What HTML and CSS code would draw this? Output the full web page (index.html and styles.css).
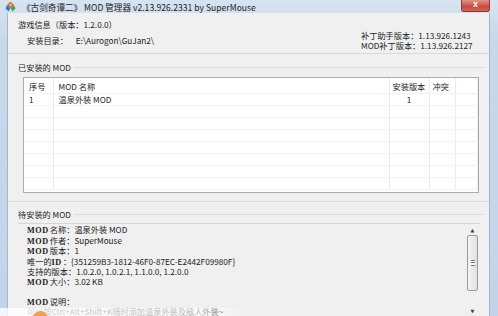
FILE: index.html
```html
<!DOCTYPE html>
<html>

<head>
	<meta charset="utf-8" />
	<title>《古剑奇谭二》 MOD 管理器</title>
	<meta name="viewport" content="width=device-width, initial-scale=1" />
	<link rel="stylesheet" href="styles.css">
</head>

<body>
	<div class="window">
		<div class="titlebar">
			<svg class="app-icon" width="11" height="11" viewBox="0 0 11 11">
				<path d="M5.5 0.5 L9 4 L5.5 7 L2 4 Z" fill="#e2632d" />
				<path d="M2 4 L5.5 7 L3.5 10.5 L0.5 7.5 Z" fill="#3d74c4" />
				<path d="M9 4 L10.5 7.5 L7.5 10.5 L5.5 7 Z" fill="#4aa34a" />
				<path d="M5.5 2 L7 4 L5.5 5.5 L4 4 Z" fill="#f6c24a" />
			</svg>
			<span class="title">《古剑奇谭二》 MOD 管理器 v2.13.926.2331 by SuperMouse</span>
			<div class="close">x</div>
		</div>

		<div class="client">
			<section class="info">
				<div class="caption">游戏信息（版本：1.2.0.0）</div>
				<div class="info-row">
					<div class="path">
						<span class="path-label">安装目录：</span>
						<span class="path-value">E:\Aurogon\GuJan2\</span>
					</div>
					<div class="versions">
						<div>补丁助手版本：1.13.926.1243</div>
						<div>MOD补丁版本：1.13.926.2127</div>
					</div>
				</div>
			</section>

			<section class="group installed">
				<div class="caption line">已安装的 MOD</div>
				<div class="listview">
					<table>
						<colgroup>
							<col class="c-no">
							<col class="c-name">
							<col class="c-ver">
							<col class="c-conf">
							<col>
						</colgroup>
						<thead>
							<tr>
								<th>序号</th>
								<th>MOD 名称</th>
								<th>安装版本</th>
								<th>冲突</th>
								<th></th>
							</tr>
						</thead>
						<tbody>
							<tr>
								<td>1</td>
								<td>温泉外装 MOD</td>
								<td class="center">1</td>
								<td></td>
								<td></td>
							</tr>
							<tr><td></td><td></td><td></td><td></td><td></td></tr>
							<tr><td></td><td></td><td></td><td></td><td></td></tr>
							<tr><td></td><td></td><td></td><td></td><td></td></tr>
							<tr><td></td><td></td><td></td><td></td><td></td></tr>
							<tr><td></td><td></td><td></td><td></td><td></td></tr>
							<tr><td></td><td></td><td></td><td></td><td></td></tr>
							<tr><td></td><td></td><td></td><td></td><td></td></tr>
						</tbody>
					</table>
				</div>
			</section>

			<section class="group pending">
				<div class="caption line">待安装的 MOD</div>
				<div class="textbox">
					<div class="text">
						<div><b>MOD</b>名称：温泉外装 MOD</div>
						<div><b>MOD</b>作者：SuperMouse</div>
						<div><b>MOD</b>版本：1</div>
						<div>唯一的<b>ID</b>：{351259B3-1812-46F0-87EC-E2442F09980F}</div>
						<div>支持的版本：1.0.2.0, 1.0.2.1, 1.1.0.0, 1.2.0.0</div>
						<div><b>MOD</b>大小：3.02 KB</div>
						<div>&nbsp;</div>
						<div><b>MOD</b>说明：</div>
						<div>可以按Ctrl+Alt+Shift+K随时添加温泉外装及敌人外装~</div>
					</div>
					<div class="scrollbar">
						<div class="arrow">&#9650;</div>
						<div class="thumb"><span class="grip"></span></div>
						<div class="arrow down">&#9660;</div>
					</div>
				</div>
			</section>
		</div>

		<!-- watermark strip over the bottom edge of the shot -->
		<div class="watermark"><span class="dot"></span></div>
	</div>
</body>

</html>
```

FILE: styles.css
```css
html, body {
	margin: 0;
	padding: 0;
}

body {
	width: 498px;
	height: 316px;
	overflow: hidden;
	font-family: "Noto Sans CJK SC", "Liberation Sans", sans-serif;
	font-size: 8.2px;
	color: #222;
}

.window {
	position: relative;
	display: flex;
	flex-direction: column;
	width: 498px;
	height: 316px;
	background: linear-gradient(#d6e3f1, #c8d8eb 40px, #c3d4e9);
}

/* title bar */
.titlebar {
	display: flex;
	align-items: center;
	height: 18px;
	padding-left: 5px;
}

.app-icon {
	flex: none;
	margin-top: -1px;
}

.title {
	margin-left: 6px;
	line-height: 12px;
	font-size: 8.6px;
	color: #1e1e1e;
	white-space: nowrap;
}

.close {
	align-self: flex-start;
	margin-left: auto;
	margin-right: 8px;
	width: 27px;
	height: 11px;
	line-height: 9px;
	text-align: center;
	color: #fff;
	font-family: "Liberation Sans", sans-serif;
	font-weight: bold;
	font-size: 9px;
	border: 1px solid #8d3b33;
	border-top: none;
	border-radius: 0 0 3px 3px;
	background: linear-gradient(#e1928a, #c9493d 60%, #d2695d);
}

/* client area */
.client {
	flex: 1;
	margin: 0 8px 0 7px;
	background: #f0f0f0;
	border-left: 1px solid #a5b6cb;
	border-right: 1px solid #a5b6cb;
}

.caption {
	line-height: 11px;
	white-space: nowrap;
}

.caption.line {
	display: flex;
	align-items: center;
	gap: 3px;
}

.caption.line::after {
	content: "";
	flex: 1;
	height: 1px;
	background: #dcdcdc;
	margin-right: 4px;
}

.info {
	padding: 6px 0 3px 10px;
	border-bottom: 1px solid #d9d9d9;
}

.info-row {
	display: flex;
	justify-content: space-between;
	height: 20px;
}

.path {
	padding: 5px 0 0 9px;
	line-height: 11px;
	white-space: nowrap;
}

.path-value {
	margin-left: 6px;
}

.versions {
	width: 128px;
	padding-top: 1px;
	line-height: 9.5px;
	white-space: nowrap;
}

.group {
	padding-left: 10px;
	border-bottom: 1px solid #d9d9d9;
}

.installed {
	padding-top: 8px;
	padding-bottom: 8px;
}

/* list view */
.listview {
	margin: 4px 10px 0 5px;
	height: 114px;
	background: #fff;
	border: 1px solid #acacac;
	overflow: hidden;
}

.listview table {
	width: 100%;
	border-collapse: collapse;
	table-layout: fixed;
}

.c-no { width: 29px; }
.c-name { width: 336px; }
.c-ver { width: 40px; }
.c-conf { width: 26px; }

.listview th {
	height: 15px;
	padding: 0 0 0 5px;
	font-weight: normal;
	text-align: left;
	white-space: nowrap;
	border-right: 1px solid #ececec;
	border-bottom: 1px solid #f2f2f2;
}

.listview th:nth-child(3),
.listview th:nth-child(4) {
	padding-left: 3px;
}

.listview td {
	height: 11px;
	padding: 0 0 0 5px;
	line-height: 11px;
	white-space: nowrap;
	border-right: 1px solid #ececec;
	border-bottom: 1px solid #f3f3f3;
}

.listview td.center {
	padding: 0;
	text-align: center;
}

.pending {
	padding-top: 7px;
	border-bottom: none;
}

/* read-only text box */
.textbox {
	display: flex;
	margin: 3px 9px 0 0;
	height: 92px;
	border-top: 1px solid #d6d6d6;
}

.text {
	flex: 1;
	padding: 1px 0 0 9px;
	line-height: 9.5px;
	white-space: nowrap;
}

.text b {
	font-family: "Liberation Serif", serif;
	font-weight: bold;
	letter-spacing: 0.6px;
	margin-right: 1px;
}

.scrollbar {
	display: flex;
	flex-direction: column;
	align-items: center;
	width: 13px;
	margin-right: 1px;
}

.arrow {
	font-family: "DejaVu Sans", sans-serif;
	font-size: 5px;
	line-height: 8px;
	height: 9px;
	color: #444;
	margin-top: 2px;
}

.arrow.down {
	margin-top: auto;
}

.thumb {
	display: flex;
	align-items: center;
	justify-content: center;
	width: 9px;
	height: 54px;
	border: 1px solid #9c9c9c;
	border-radius: 2px;
	background: linear-gradient(90deg, #f4f4f4, #e0e0e0);
}

.grip {
	width: 4px;
	height: 4px;
	border-top: 1px solid #777;
	border-bottom: 1px solid #777;
	background: linear-gradient(#fff 0 1px, #777 1px 2px, #fff 2px);
}

/* pale strip at the bottom left */
.watermark {
	position: absolute;
	left: 0;
	bottom: 0;
	width: 250px;
	height: 8px;
	background: linear-gradient(90deg, rgba(255, 255, 255, 0.8), rgba(255, 255, 255, 0.65) 80%, rgba(255, 255, 255, 0));
}

.dot {
	position: absolute;
	left: 33px;
	top: 3px;
	width: 15px;
	height: 15px;
	border-radius: 50%;
	background: #f0a04a;
}
```
